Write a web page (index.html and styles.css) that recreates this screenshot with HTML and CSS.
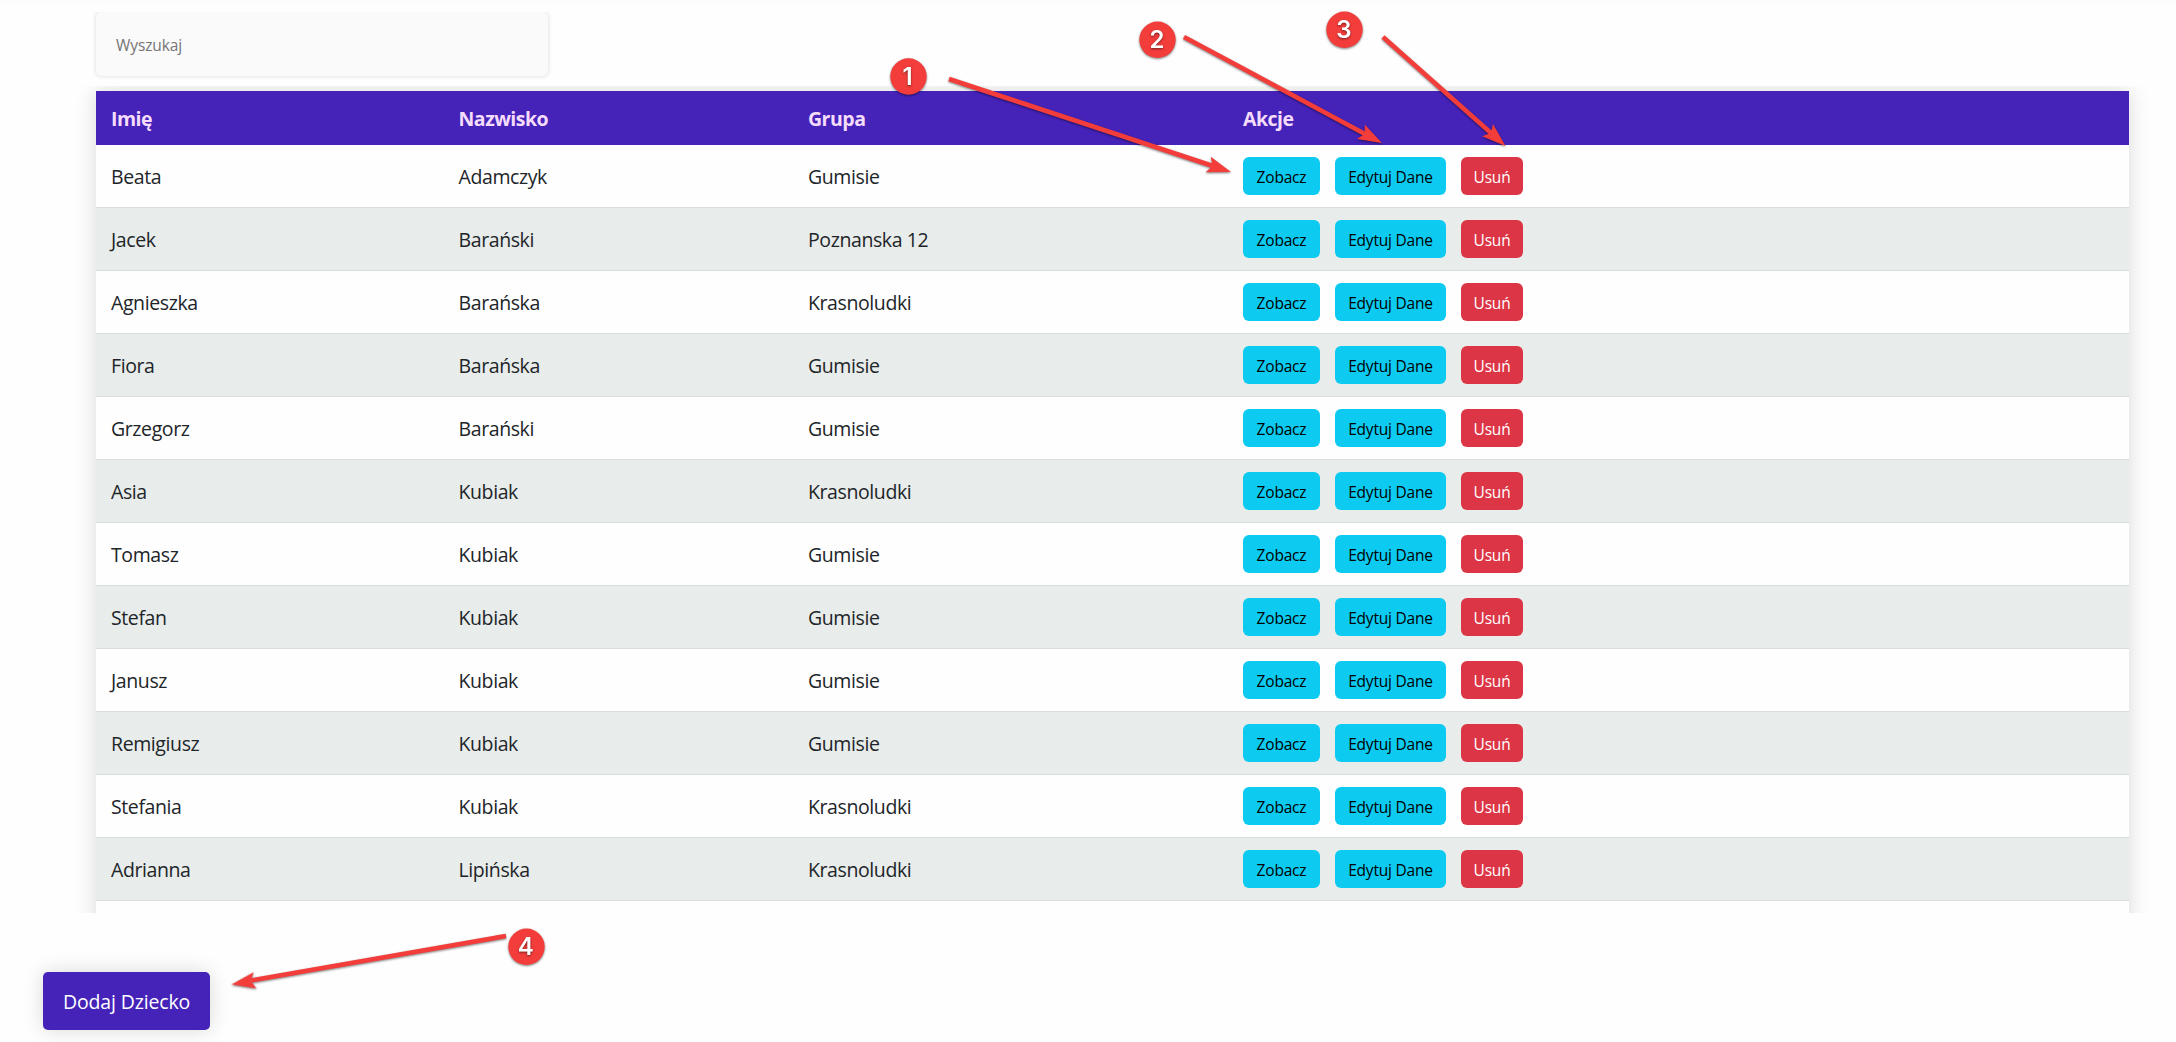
FILE: index.html
```html
<!DOCTYPE html>
<html lang="pl">
<head>
<meta charset="utf-8">
<title>Dzieci</title>
<link rel="stylesheet" href="styles.css">
</head>
<body>
<main class="page">
  <div class="search-wrap"><input class="search" type="text" placeholder="Wyszukaj"></div>
  <section class="table-scroll">
    <table class="table">
      <colgroup><col class="c-first"><col class="c-last"><col class="c-group"><col></colgroup>
      <thead><tr><th>Imię</th><th>Nazwisko</th><th>Grupa</th><th>Akcje</th></tr></thead>
      <tbody id="rows"></tbody>
    </table>
  </section>
  <footer class="footer"><button class="add">Dodaj Dziecko</button></footer>
</main>

<svg class="notes" width="2176" height="1042" viewBox="0 0 2176 1042">
  <defs>
    <path id="head" d="M0 0L-24 -8.2L-19.5 0L-24 8.2Z"/>
  </defs>
  <g class="arrows">
    <path class="shaft" d="M949 79L1213 166M1184 37L1365 134M1383 37L1491 133M506 936L251 980.6"/>
    <use href="#head" transform="translate(1231 172) rotate(18.3)"/>
    <use href="#head" transform="translate(1382 143) rotate(28.2)"/>
    <use href="#head" transform="translate(1505.5 146) rotate(41.6)"/>
    <use href="#head" transform="translate(231.5 984.5) rotate(170)"/>
  </g>
  <g class="badges">
    <circle cx="908.5" cy="76.5" r="18.2"/><circle cx="1157.5" cy="39.8" r="18.2"/>
    <circle cx="1344.5" cy="29.8" r="18.2"/><circle cx="526.5" cy="946.8" r="18.2"/>
  </g>
  <g class="digits">
    <text x="907.5" y="85">1</text><text x="1157" y="48">2</text>
    <text x="1344" y="38">3</text><text x="525.7" y="955">4</text>
  </g>
</svg>
<script src="rows.js"></script>
</body>
</html>
```
FILE: styles.css
```css
* { box-sizing: border-box; }
body {
  margin: 0;
  background: #fefefe;
  color: #212529;
  font-family: "Open Sans", "Noto Sans", sans-serif;
  font-size: 19.5px;
}
.page {
  height: 1042px;
  display: flex;
  flex-direction: column;
  overflow: hidden;
  border-top: 3px solid #fcfcfc;
}
.search-wrap {
  flex: none;
  margin-top: 9px;
  height: 74px;
  padding: 0 96px;
  overflow: hidden;
}
.search {
  display: block;
  width: 452px;
  height: 64px;
  padding: 1px 20px 0;
  border: 0;
  border-radius: 5px;
  background: #fafafa;
  box-shadow: 0 0 4px rgba(0, 0, 0, .16);
  font: 15.5px "Open Sans", sans-serif;
  letter-spacing: -.1px;
}
.search::placeholder { color: #757575; opacity: 1; }
.table-scroll {
  flex: none;
  height: 827px;
  padding: 5px 47px 0 96px;
  overflow: hidden;
}
.table {
  width: 2033px;
  table-layout: fixed;
  border-collapse: separate;
  border-spacing: 0;
  background: #fefefe;
  box-shadow: 0 0 20px rgba(0, 0, 0, .15);
}
.c-first { width: 347.5px; }
.c-last { width: 349.5px; }
.c-group { width: 435px; }
th {
  height: 54px;
  padding: 0 15px;
  background: #4523b9;
  color: #f6dcfb;
  text-align: left;
  font-weight: 700;
  letter-spacing: -.5px;
}
td {
  height: 63px;
  padding: 0 15px;
  border-bottom: 1px solid #dadddd;
  letter-spacing: -.4px;
}
tbody tr:nth-child(even) { background: #e8ecea; }
.actions { display: flex; gap: 15px; }
.btn {
  height: 38px;
  padding: 1px 0 0;
  border: 0;
  border-radius: 6px;
  background: #0dcaf0;
  color: #000;
  font: 15.5px "Open Sans", sans-serif;
  letter-spacing: -.2px;
}
.view { width: 77px; }
.edit { width: 111px; }
.remove { width: 62px; background: #dc3545; color: #fff; }
.footer { padding: 59px 43px 0; }
.add {
  display: block;
  width: 167px;
  height: 58px;
  padding: 0;
  border: 0;
  border-radius: 5px;
  background: #4523b9;
  color: #fff;
  box-shadow: 0 0 20px rgba(0, 0, 0, .15);
  font: 19.5px "Open Sans", sans-serif;
  letter-spacing: -.15px;
}
.notes { position: absolute; left: 0; top: 0; pointer-events: none; }
.arrows, .badges { fill: #f33d3b; filter: drop-shadow(0 1.5px 1px rgba(0, 0, 0, .5)); }
.shaft { fill: none; stroke: #f33d3b; stroke-width: 4.6; }
.digits {
  fill: #fff;
  font: 600 24px Inter, sans-serif;
  text-anchor: middle;
  filter: drop-shadow(0 1.5px .8px rgba(0, 0, 0, .5));
}
```
FILE: rows.js
```js
const children = [
  ["Beata", "Adamczyk", "Gumisie"],
  ["Jacek", "Barański", "Poznanska 12"],
  ["Agnieszka", "Barańska", "Krasnoludki"],
  ["Fiora", "Barańska", "Gumisie"],
  ["Grzegorz", "Barański", "Gumisie"],
  ["Asia", "Kubiak", "Krasnoludki"],
  ["Tomasz", "Kubiak", "Gumisie"],
  ["Stefan", "Kubiak", "Gumisie"],
  ["Janusz", "Kubiak", "Gumisie"],
  ["Remigiusz", "Kubiak", "Gumisie"],
  ["Stefania", "Kubiak", "Krasnoludki"],
  ["Adrianna", "Lipińska", "Krasnoludki"]
];
const actions = '<div class="actions"><button class="btn view">Zobacz</button><button class="btn edit">Edytuj Dane</button><button class="btn remove">Usuń</button></div>';
document.getElementById("rows").innerHTML = children
  .map(c => "<tr>" + c.map(v => `<td>${v}</td>`).join("") + `<td>${actions}</td></tr>`)
  .join("") + "<tr><td></td><td></td><td></td><td></td></tr>";
```
